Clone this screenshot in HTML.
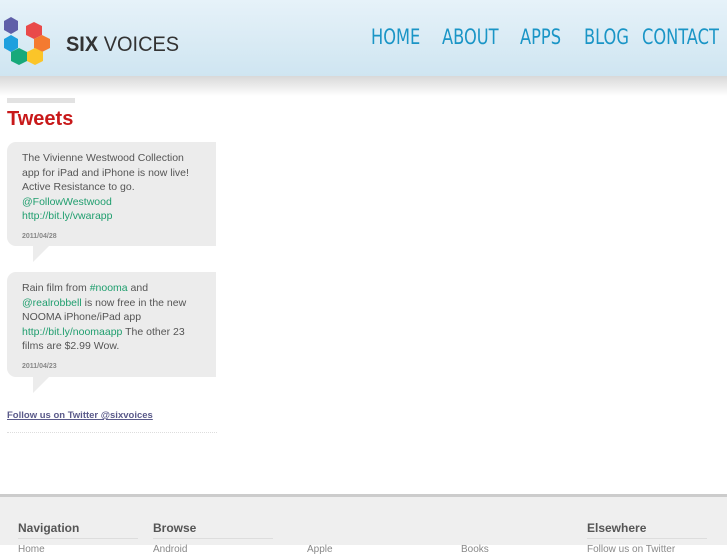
<!DOCTYPE html>
<html><head><meta charset="utf-8"><style>
*{margin:0;padding:0;box-sizing:border-box}
body{width:727px;height:545px;overflow:hidden;background:#fff;font-family:"Liberation Sans",sans-serif;position:relative}
.hdr{position:absolute;left:0;top:0;width:727px;height:76px;background:linear-gradient(#e6f2f9,#cfe5f1)}
.shadow{position:absolute;left:0;top:76px;width:727px;height:20px;background:linear-gradient(#d8d8d8,#fff)}
.brand{position:absolute;left:66px;top:33px;font-size:21px;color:#333;transform:scaleX(0.95);transform-origin:left}
.nav{position:absolute;top:25px;font-size:21px;color:#1a95c6;font-family:"DejaVu Sans Condensed","Liberation Sans",sans-serif;transform:scaleX(0.86);transform-origin:left;white-space:nowrap}
.bar{position:absolute;left:7px;top:98px;width:68px;height:5px;background:#e2e2e2}
h2{position:absolute;left:7px;top:108px;font-size:20px;color:#c8191a;font-weight:bold}
.tw{position:absolute;left:7px;width:209px;background:#ececec;border-radius:9px 0 0 9px;padding:9px 24px 0 15px;font-size:10.5px;line-height:14.6px;color:#555}
.tw a{color:#1f9e6e;text-decoration:none}
.date{font-size:7px;color:#888;margin-top:6px;font-weight:bold}
.tail{position:absolute;width:0;height:0;border-right:16px solid transparent;border-top:16px solid #ececec}
.follow{position:absolute;left:7px;top:410px;font-size:9.5px;font-weight:bold;color:#5a5a8a;text-decoration:underline}
.dots{position:absolute;left:7px;top:432px;width:210px;border-top:1px dotted #ddd}
.foot{position:absolute;left:0;top:494px;width:727px;height:51px;background:#efefef;border-top:3px solid #ccc}
.fh{position:absolute;top:24px;font-size:12px;font-weight:bold;color:#555;width:120px;border-bottom:1px solid #ddd;padding-bottom:3px}
.fl{position:absolute;top:47px;font-size:10px;color:#888}
</style></head><body>
<div class="hdr"></div>
<svg style="position:absolute;left:0;top:0" width="60" height="70" viewBox="0 0 60 70">
<polygon points="11,17 18,21 18,30 11,34 4,30 4,21" fill="#5f5fa8"/>
<polygon points="34,22 42,26 42,35 34,39 26,35 26,26" fill="#e94a4a"/>
<polygon points="11,35 18,39 18,48 11,52 4,48 4,39" fill="#1ea0de"/>
<polygon points="42,35 50,39 50,48 42,52 34,48 34,39" fill="#f47a30"/>
<polygon points="19,48 27,52 27,61 19,65 11,61 11,52" fill="#17a97a"/>
<polygon points="35,48 43,52 43,61 35,65 27,61 27,52" fill="#fbc529"/>
</svg>
<div class="brand"><b>SIX</b> VOICES</div>
<div class="nav" style="left:371px">HOME</div>
<div class="nav" style="left:442px">ABOUT</div>
<div class="nav" style="left:520px">APPS</div>
<div class="nav" style="left:584px">BLOG</div>
<div class="nav" style="left:642px">CONTACT</div>
<div class="shadow"></div>
<div class="bar"></div>
<h2>Tweets</h2>
<div class="tw" style="top:142px;height:104px">The Vivienne Westwood Collection app for iPad and iPhone is now live! Active Resistance to go.<br><a>@FollowWestwood</a><br><a>http://bit.ly/vwarapp</a><div class="date">2011/04/28</div></div>
<div class="tail" style="left:33px;top:246px"></div>
<div class="tw" style="top:272px;height:105px">Rain film from <a>#nooma</a> and <a>@realrobbell</a> is now free in the new NOOMA iPhone/iPad app <a>http://bit.ly/noomaapp</a> The other 23 films are $2.99 Wow.<div class="date">2011/04/23</div></div>
<div class="tail" style="left:33px;top:377px"></div>
<div class="follow">Follow us on Twitter @sixvoices</div>
<div class="dots"></div>
<div class="foot">
<div class="fh" style="left:18px">Navigation</div>
<div class="fh" style="left:153px">Browse</div>
<div class="fh" style="left:587px">Elsewhere</div>
<div class="fl" style="left:18px">Home</div>
<div class="fl" style="left:153px">Android</div>
<div class="fl" style="left:307px">Apple</div>
<div class="fl" style="left:461px">Books</div>
<div class="fl" style="left:587px">Follow us on Twitter</div>
</div>
</body></html>
